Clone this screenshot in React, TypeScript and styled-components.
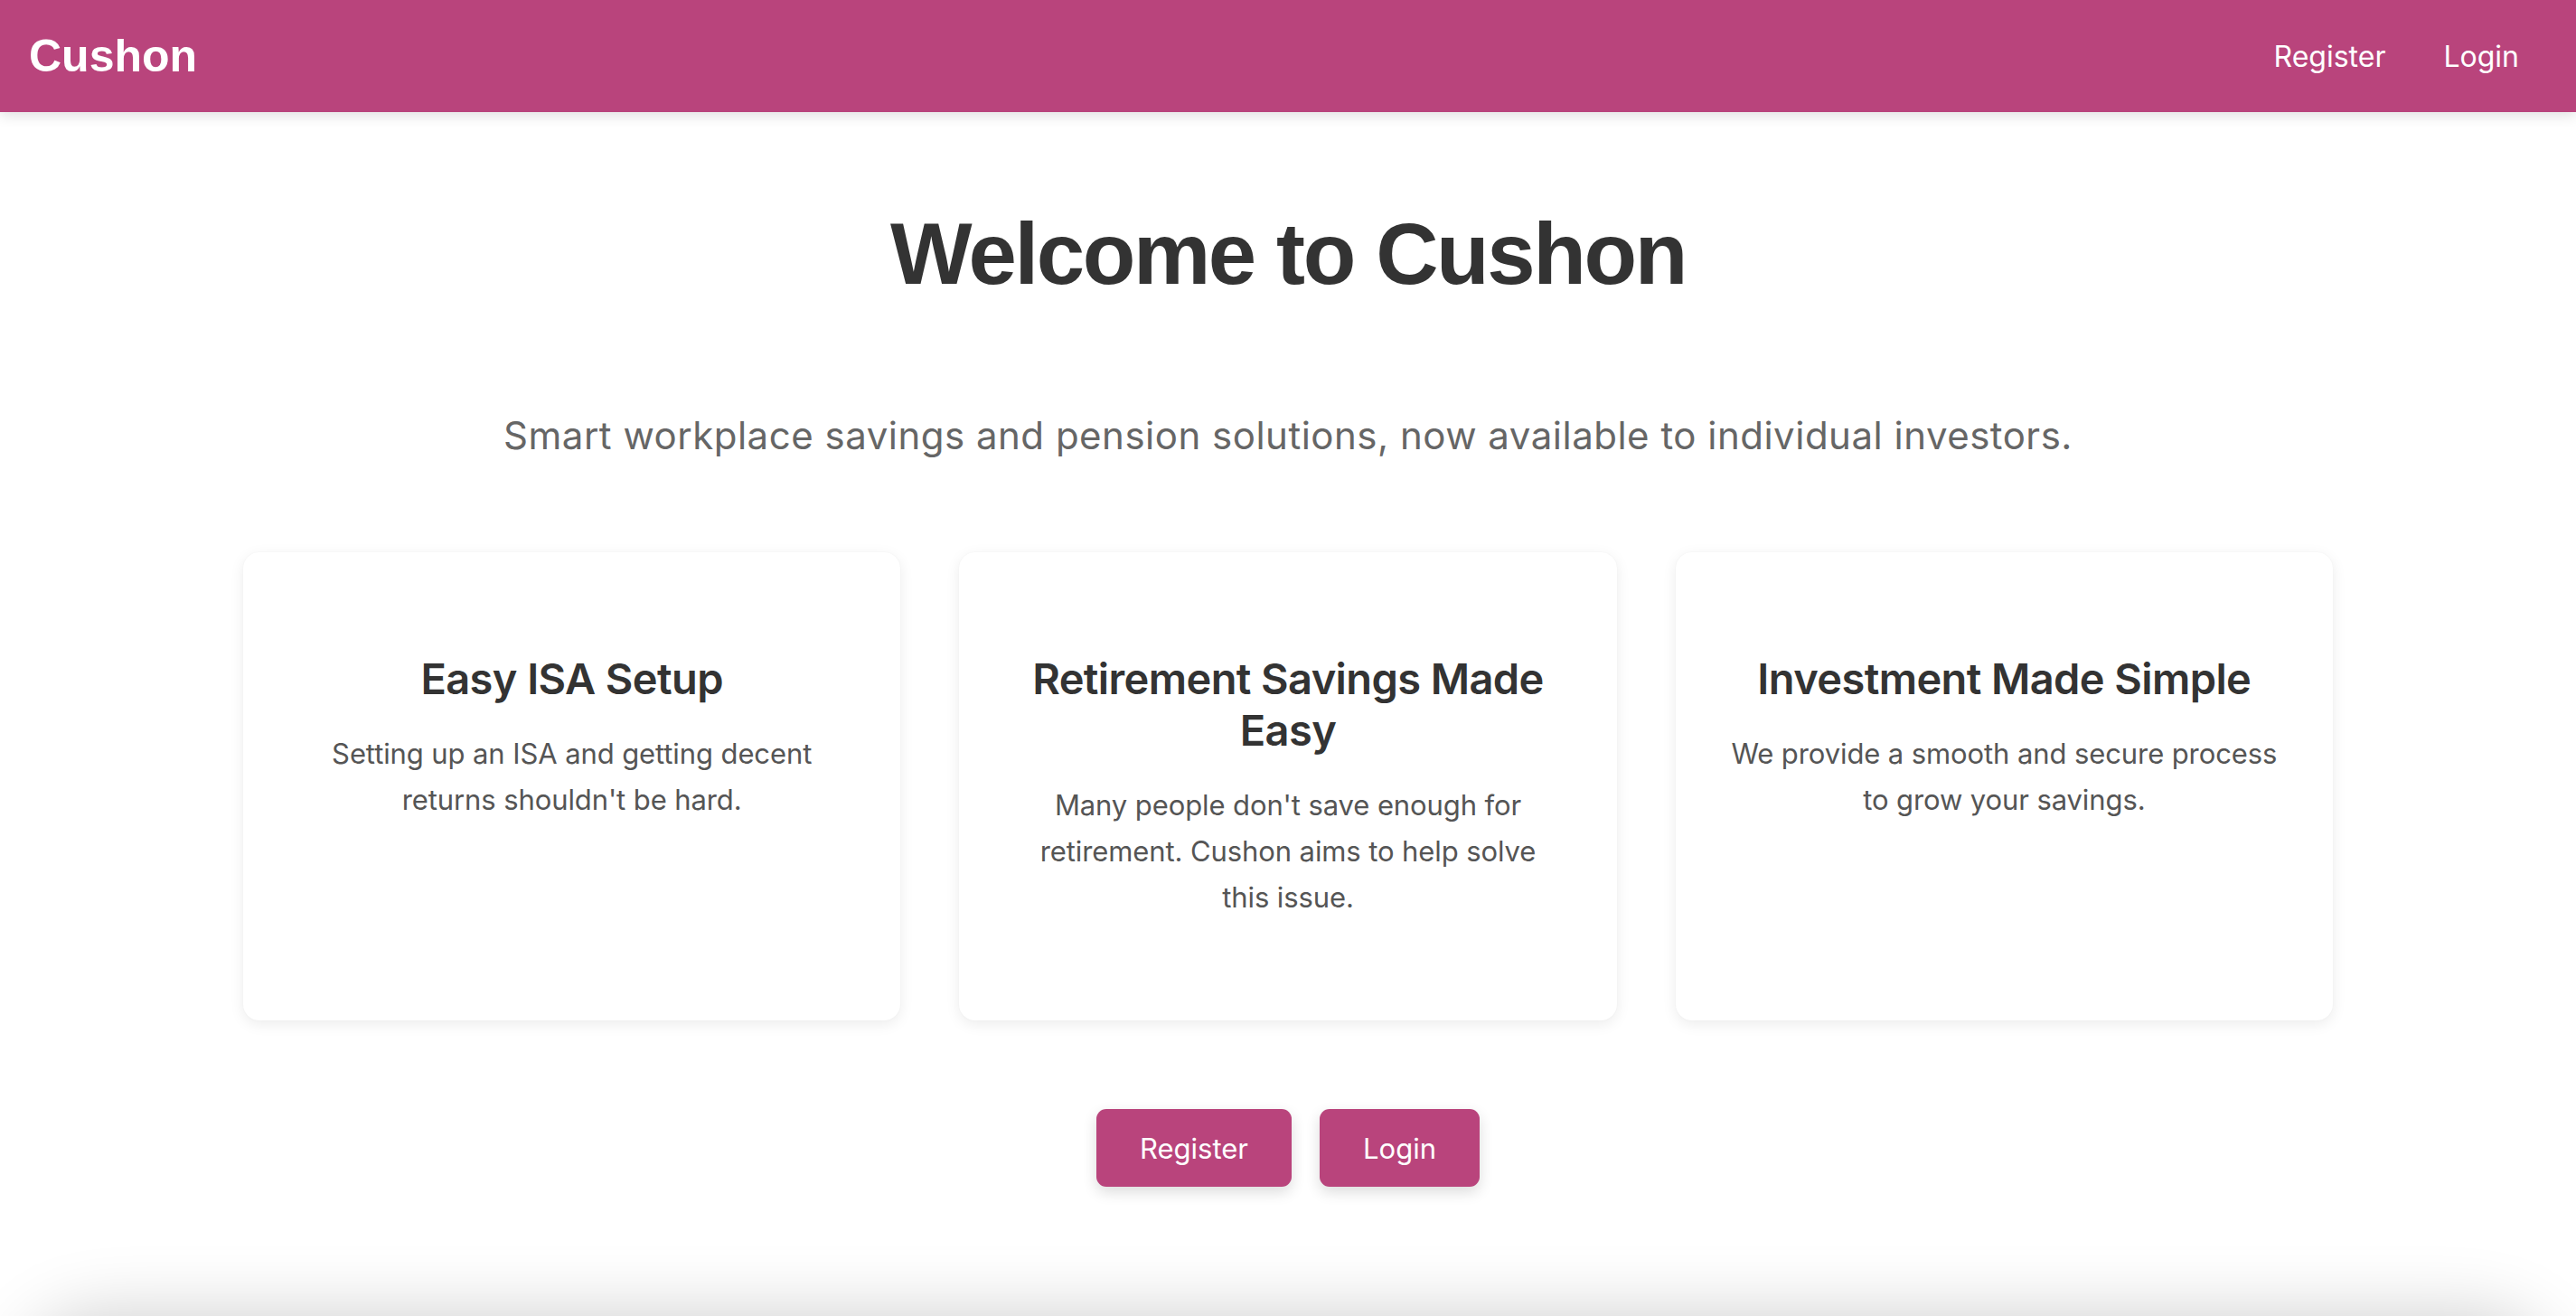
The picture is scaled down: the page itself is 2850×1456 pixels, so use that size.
import React from "react";
import styled, { createGlobalStyle } from "styled-components";

const GlobalStyle = createGlobalStyle`
  html, body {
    margin: 0;
    padding: 0;
    background: #ffffff;
    font-family: Inter, "Noto Sans", "Liberation Sans", sans-serif;
    -webkit-font-smoothing: antialiased;
  }
  * { box-sizing: border-box; }
`;

const PINK = "#b9447c";

const Page = styled.div`
  display: flex;
  flex-direction: column;
  min-height: 100vh;
  overflow: hidden;
`;

const Header = styled.header`
  height: 124px;
  flex: none;
  display: flex;
  align-items: center;
  justify-content: space-between;
  padding: 0 63px 0 32px;
  background: ${PINK};
  box-shadow: 0 4px 14px rgba(0, 0, 0, 0.12);
  position: relative;
  z-index: 2;
`;

const Logo = styled.div`
  font-family: "Liberation Sans", Arial, sans-serif;
  font-weight: 700;
  font-size: 50px;
  color: #ffffff;
`;

const Nav = styled.nav`
  display: flex;
  align-items: center;
  gap: 64px;
`;

const NavLink = styled.a`
  font-family: Inter, sans-serif;
  font-size: 32px;
  font-weight: 400;
  color: #ffffff;
  text-decoration: none;
  cursor: pointer;
`;

const Main = styled.main`
  min-height: calc(100vh - 124px);
  display: flex;
  flex-direction: column;
  align-items: center;
  padding: 103px 0 0;
`;

const Title = styled.h1`
  margin: 0;
  font-family: "Liberation Sans", Arial, sans-serif;
  font-weight: 700;
  font-size: 96px;
  line-height: 107px;
  letter-spacing: -2.4px;
  color: #333333;
`;

const Subtitle = styled.p`
  margin: 116px 0 0;
  font-family: Inter, sans-serif;
  font-size: 42px;
  line-height: 64px;
  letter-spacing: 0.5px;
  font-weight: 400;
  color: #666666;
`;

const Cards = styled.section`
  margin-top: 97px;
  width: 2312px;
  display: grid;
  grid-template-columns: repeat(3, 1fr);
  gap: 65px;
`;

const Card = styled.article`
  background: #ffffff;
  border-radius: 18px;
  box-shadow: 0 4px 16px rgba(0, 0, 0, 0.08), 0 0 2px rgba(0, 0, 0, 0.04);
  padding: 111px 61px 110px;
  min-height: 518px;
  text-align: center;
`;

const CardTitle = styled.h3`
  margin: 0 0 29px;
  font-family: Inter, sans-serif;
  font-weight: 600;
  font-size: 47px;
  line-height: 57px;
  letter-spacing: -0.6px;
  color: #333333;
`;

const CardText = styled.p`
  margin: 0;
  font-family: Inter, sans-serif;
  font-size: 31px;
  line-height: 51px;
  letter-spacing: -0.1px;
  color: #555555;
`;

const Actions = styled.div`
  margin-top: 98px;
  display: flex;
  gap: 31px;
`;

const Button = styled.button`
  height: 86px;
  padding: 0 48px;
  border: none;
  border-radius: 11px;
  background: ${PINK};
  color: #ffffff;
  font-family: Inter, sans-serif;
  font-size: 31px;
  font-weight: 400;
  box-shadow: 0 6px 16px rgba(0, 0, 0, 0.14);
  cursor: pointer;
`;

const Footer = styled.footer`
  flex: none;
  height: 240px;
  margin: 0 28px;
  background: #ffffff;
  border-radius: 80px 80px 0 0;
  box-shadow: 0 0 80px rgba(0, 0, 0, 0.2);
`;

const cards = [
  {
    title: "Easy ISA Setup",
    text: "Setting up an ISA and getting decent returns shouldn't be hard.",
  },
  {
    title: "Retirement Savings Made Easy",
    text: "Many people don't save enough for retirement. Cushon aims to help solve this issue.",
  },
  {
    title: "Investment Made Simple",
    text: "We provide a smooth and secure process to grow your savings.",
  },
];

export default function App() {
  return (
    <>
      <GlobalStyle />
      <Page>
        <Header>
          <Logo>Cushon</Logo>
          <Nav>
            <NavLink>Register</NavLink>
            <NavLink>Login</NavLink>
          </Nav>
        </Header>
        <Main>
          <Title>Welcome to Cushon</Title>
          <Subtitle>
            Smart workplace savings and pension solutions, now available to individual investors.
          </Subtitle>
          <Cards>
            {cards.map((c) => (
              <Card key={c.title}>
                <CardTitle>{c.title}</CardTitle>
                <CardText>{c.text}</CardText>
              </Card>
            ))}
          </Cards>
          <Actions>
            <Button>Register</Button>
            <Button>Login</Button>
          </Actions>
        </Main>
        <Footer />
      </Page>
    </>
  );
}
